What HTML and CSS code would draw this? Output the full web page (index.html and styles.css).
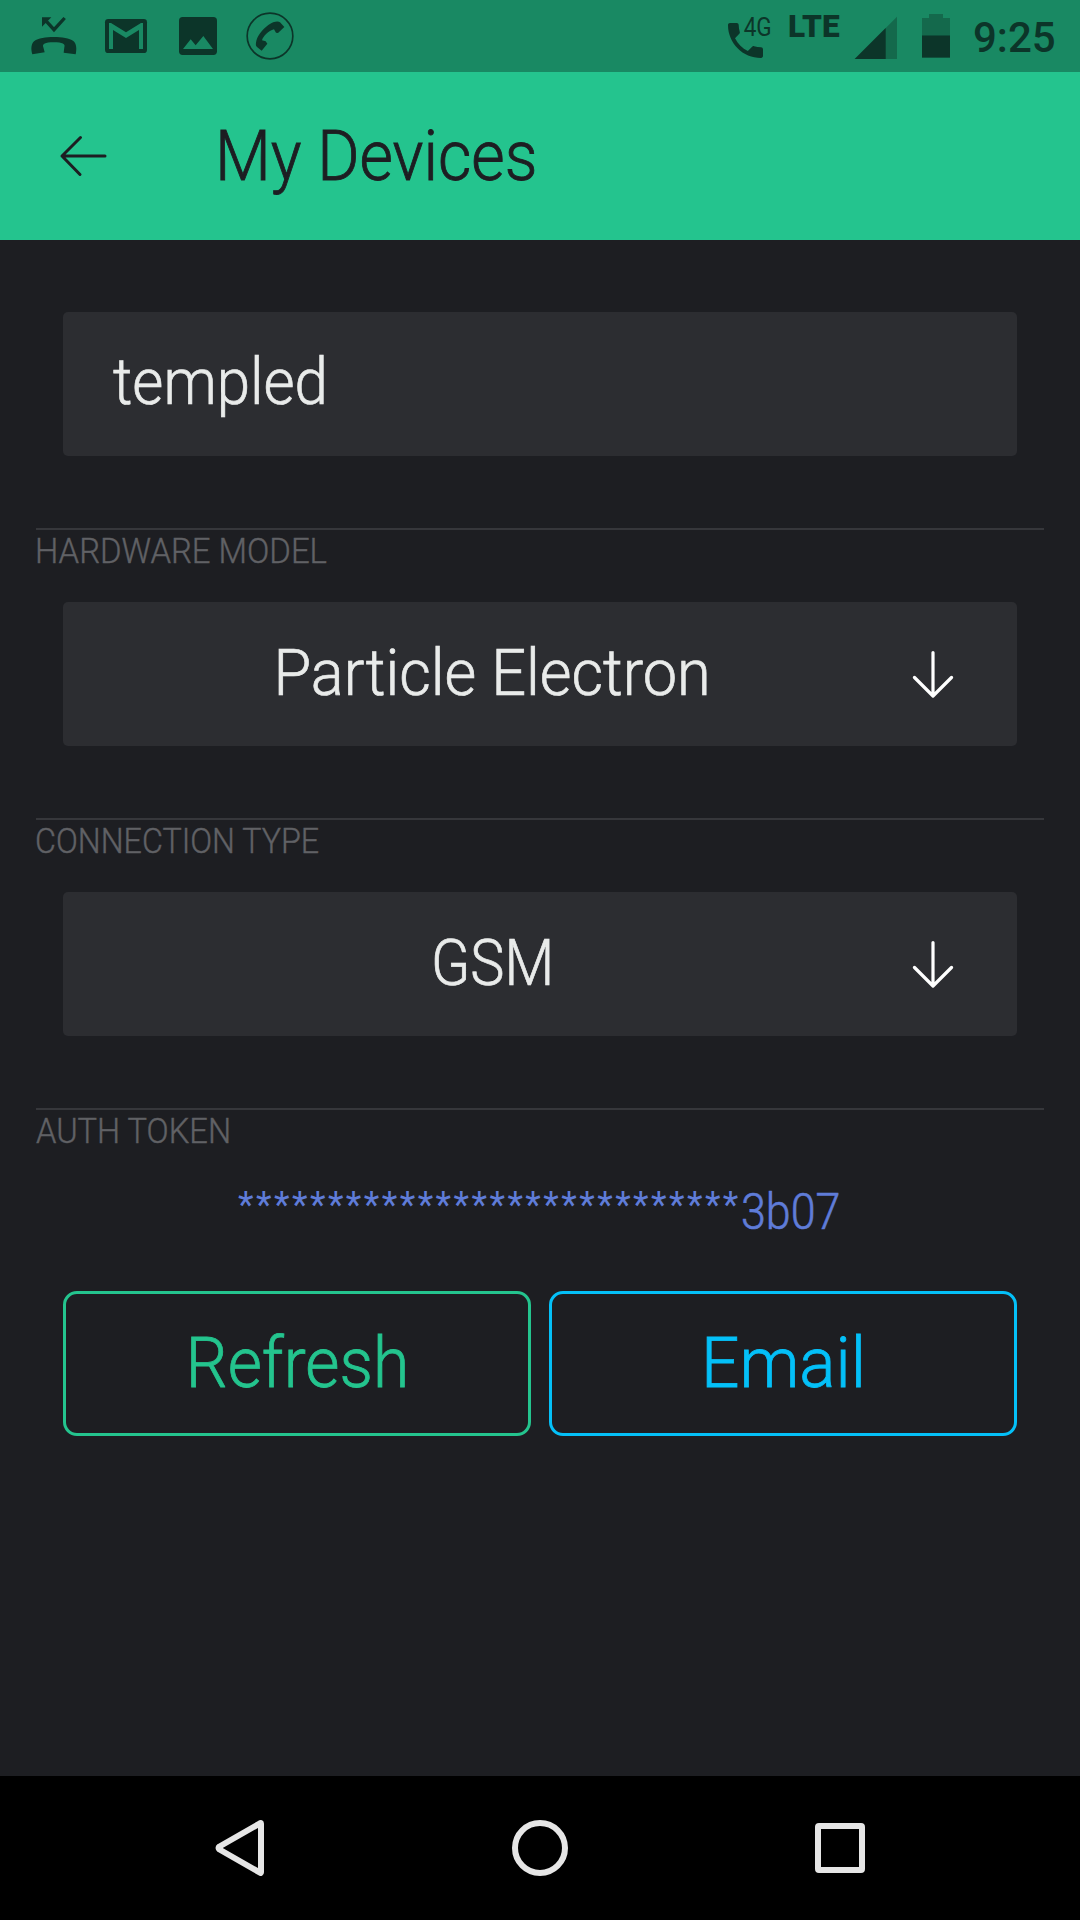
FILE: index.html
```
<!DOCTYPE html>
<html lang="en">
<head>
<meta charset="utf-8">
<title>My Devices</title>
<link rel="stylesheet" href="styles.css">
</head>
<body>
<div class="screen">
  <div class="status">
    <div class="status-left">
      <svg class="notif" viewBox="54 0 216 216"><path d="M97 163C92 145 94 131 103 123C125 107 198 107 220 123C229 131 231 145 227 163L191 158L193 142C197 132 188 127 161 127C135 127 126 132 130 142L134 157Z"/><path d="M126 52H154L126 80Z"/><path d="M140 65L162 89L194 54" fill="none" stroke="#0c3529" stroke-width="10"/></svg>
      <svg class="notif" viewBox="270 0 216 216"><rect x="315" y="57" width="126" height="102" rx="10"/><path class="cut" d="M327 147V69H333L378 97L423 69H429V147H417V90L378 114L339 90V147Z"/></svg>
      <svg class="notif" viewBox="486 0 216 216"><rect x="537" y="51" width="114" height="114" rx="11"/><path class="cut" d="M549 147L572 118L587 136L610 108L639 147Z"/></svg>
      <svg class="notif" viewBox="702 0 216 216"><circle cx="810" cy="108" r="68.5" fill="none" stroke="#0c3529" stroke-width="5"/><path d="M853 81L840 67C835 62 820 64 805 75C785 90 770 110 768 128C767 135 768 138 771 141L785 152L802 131L797 124L786 121C790 108 805 92 822 88L828 98L834 99Z"/></svg>
    </div>
    <div class="status-right">
      <svg class="volte" viewBox="72 0 156 216"><path transform="translate(84 69) scale(5.83) translate(-3 -3)" d="M6.62 10.79c1.44 2.83 3.76 5.14 6.59 6.59l2.2-2.2c.27-.27.67-.36 1.02-.24 1.12.37 2.33.57 3.57.57.55 0 1 .45 1 1V20c0 .55-.45 1-1 1-9.39 0-17-7.61-17-17 0-.55.45-1 1-1h3.5c.55 0 1 .45 1 1 0 1.25.2 2.45.57 3.57.11.35.03.74-.25 1.02l-2.2 2.2z"/><text class="gen" x="131" y="108" textLength="84" lengthAdjust="spacingAndGlyphs">4G</text></svg>
      <span class="lte">LTE</span>
      <svg class="signal" viewBox="465 0 132 216"><path class="dim" d="M594 50V177H467Z"/><path d="M560 84V177H467Z"/></svg>
      <svg class="battery" viewBox="669 0 84 216"><path class="dim" d="M690 42H732V54H753V106H669V54H690Z"/><path d="M669 106H753V173H669Z"/></svg>
      <span class="clock">9:25</span>
    </div>
  </div>

  <header class="appbar">
    <svg class="back" viewBox="0 0 48 42"><path d="M21.5 2.5L3 21L21 39.5M3 21H46"/></svg>
    <h1 class="title">My Devices</h1>
  </header>

  <main class="content">
    <div class="field name"><span class="value value-name">templed</span></div>

    <section class="group">
      <h2 class="label label-hardware">HARDWARE MODEL</h2>
      <div class="field select">
        <span class="choice"><span class="value value-model">Particle Electron</span></span>
        <svg class="down" viewBox="0 0 42 48"><path d="M21 2.5V45.5M2.5 27.5L21 46L39.5 27.5"/></svg>
      </div>
    </section>

    <section class="group">
      <h2 class="label label-connection">CONNECTION TYPE</h2>
      <div class="field select">
        <span class="choice"><span class="value value-gsm">GSM</span></span>
        <svg class="down" viewBox="0 0 42 48"><path d="M21 2.5V45.5M2.5 27.5L21 46L39.5 27.5"/></svg>
      </div>
    </section>

    <section class="group">
      <h2 class="label label-token">AUTH TOKEN</h2>
      <div class="token"><span class="mask">****************************</span><span class="tail">3b07</span></div>
      <div class="actions">
        <div class="button refresh"><span class="caption">Refresh</span></div>
        <div class="button email"><span class="caption">Email</span></div>
      </div>
    </section>
  </main>

  <nav class="navbar">
    <svg viewBox="0 0 60 60"><path d="M51 5.8Q51 4.5 50 5.3L9.5 28.5Q7.5 30 9.5 31.5L50 54.7Q51 55.5 51 54.2Z"/></svg>
    <svg viewBox="0 0 60 60"><circle cx="30" cy="30" r="25"/></svg>
    <svg viewBox="0 0 60 60"><rect x="8" y="8" width="44" height="44" rx="1"/></svg>
  </nav>
</div>
</body>
</html>
```
FILE: styles.css
```
* { box-sizing: border-box; }

body {
  margin: 0;
  background: #1e1f23;
  font-family: Roboto, "Liberation Sans", sans-serif;
  font-weight: 300;
}

.screen {
  display: flex;
  flex-direction: column;
  width: 1080px;
  height: 1920px;
  overflow: hidden;
  background: #1d1e22;
}

svg { display: block; flex: none; }

/* Status bar */
.status {
  display: flex;
  justify-content: space-between;
  height: 72px;
  padding: 0 25px 0 18px;
  background: #198963;
  color: #0c3529;
  fill: #0c3529;
}
.status-left, .status-right { display: flex; }
.notif { width: 72px; height: 72px; }
.cut { fill: #198963; }
.dim { fill: #14694c; }
.volte { width: 52px; height: 72px; }
.gen { font-size: 80px; font-weight: 400; }
.lte {
  width: 66px;
  margin-left: 12px;
  font-size: 31.6px;
  font-weight: 900;
  line-height: 54px;
}
.signal { width: 44px; height: 72px; }
.battery { width: 28px; height: 72px; margin-left: 24px; }
.clock {
  width: 82px;
  margin-left: 23px;
  font-size: 42px;
  font-weight: 500;
  line-height: 75px;
}

/* App bar */
.appbar {
  display: flex;
  align-items: center;
  height: 168px;
  padding-left: 59px;
  background: #24c48e;
}
.back {
  width: 48px;
  height: 42px;
  fill: none;
  stroke: #1d1e22;
  stroke-width: 3;
  stroke-linecap: round;
  stroke-linejoin: round;
}
.title {
  margin: 0 0 1px 108px;
  color: #1d1e22;
  font-size: 70px;
  font-weight: 300;
  line-height: 84px;
  white-space: nowrap;
  transform: scaleX(.922);
  transform-origin: left;
  -webkit-text-stroke: .9px;
}

/* Form */
.content { flex: 1; padding: 72px 36px 0; }
.field {
  display: flex;
  align-items: center;
  height: 144px;
  margin: 0 27px;
  border-radius: 5px;
  background: #2c2d31;
}
.name { padding-left: 50px; }
.value {
  display: inline-block;
  padding-bottom: 3px;
  color: #e9ebea;
  font-size: 65px;
  line-height: 78px;
  white-space: nowrap;
  -webkit-text-stroke: .7px;
}
.value-name { padding-bottom: 5px; transform: scaleX(.924); transform-origin: left; }
.value-model { transform: scaleX(.942); }
.value-gsm { transform: scaleX(.885); }
.choice { width: 859px; text-align: center; }
.down {
  width: 42px;
  height: 48px;
  margin-left: -10px;
  fill: none;
  stroke: #fff;
  stroke-width: 3.2;
  stroke-linecap: round;
  stroke-linejoin: round;
}
.group { margin-top: 72px; border-top: 2px solid #36373b; }
.label {
  width: max-content;
  height: 72px;
  margin: 0;
  color: #606165;
  font-size: 35px;
  font-weight: 300;
  line-height: 44px;
  white-space: nowrap;
  transform-origin: left;
  -webkit-text-stroke: .4px;
}
.label-hardware { margin-left: -1px; transform: scaleX(.94); }
.label-connection { margin-left: -1px; transform: scaleX(.921); }
.label-token { transform: scaleX(.933); }

/* Masked auth token with its last four characters in clear */
.token {
  display: flex;
  justify-content: center;
  height: 60px;
  margin-bottom: 49px;
  color: #5f7cd8;
  line-height: 60px;
}
.mask {
  font-size: 36px;
  font-weight: 400;
  letter-spacing: 2.45px;
  line-height: 46px;
}
.tail {
  margin-right: -11px;
  font-size: 50.5px;
  transform: scaleX(.888);
  transform-origin: left;
  -webkit-text-stroke: .6px;
}
.actions { display: flex; gap: 18px; margin: 0 27px; }
.button {
  flex: 1;
  display: flex;
  align-items: center;
  justify-content: center;
  height: 145px;
  border: 3px solid;
  border-radius: 14px;
}
.caption {
  padding-bottom: 2px;
  font-size: 70px;
  line-height: 84px;
  -webkit-text-stroke: .8px;
}
.refresh { color: #24c48e; }
.email { color: #04c0f8; }
.refresh .caption { transform: scaleX(.943); }
.email .caption { transform: scaleX(.965); }

/* System navigation */
.navbar {
  display: flex;
  justify-content: center;
  align-items: center;
  gap: 240px;
  height: 144px;
  background: #000;
}
.navbar svg {
  width: 60px;
  height: 60px;
  fill: none;
  stroke: #e6e6e6;
  stroke-width: 6;
  stroke-linejoin: round;
}
```
